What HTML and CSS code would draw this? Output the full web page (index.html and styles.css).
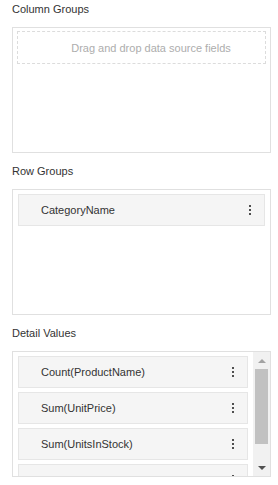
FILE: index.html
```html
<!DOCTYPE html>
<html lang="en">
<head>
    <meta charset="UTF-8">
    <meta name="viewport" content="width=device-width, initial-scale=1.0">
    <title>Pivot Field List</title>
    <link rel="stylesheet" href="styles.css">
</head>
<body>
<div class="field-list">
    <div class="axis-title first">Column Groups</div>
    <div class="axis-box">
        <div class="drop-hint">Drag and drop data source fields</div>
    </div>

    <div class="axis-title">Row Groups</div>
    <div class="axis-box">
        <div class="field-item">
            <span class="field-name">CategoryName</span>
            <svg class="kebab" width="4" height="12" viewBox="0 0 4 12"><rect x="1" y="1" width="2" height="2"/><rect x="1" y="5" width="2" height="2"/><rect x="1" y="9" width="2" height="2"/></svg>
        </div>
    </div>

    <div class="axis-title">Detail Values</div>
    <div class="axis-box scrolled">
        <div class="axis-list">
            <div class="field-item">
                <span class="field-name">Count(ProductName)</span>
                <svg class="kebab" width="4" height="12" viewBox="0 0 4 12"><rect x="1" y="1" width="2" height="2"/><rect x="1" y="5" width="2" height="2"/><rect x="1" y="9" width="2" height="2"/></svg>
            </div>
            <div class="field-item">
                <span class="field-name">Sum(UnitPrice)</span>
                <svg class="kebab" width="4" height="12" viewBox="0 0 4 12"><rect x="1" y="1" width="2" height="2"/><rect x="1" y="5" width="2" height="2"/><rect x="1" y="9" width="2" height="2"/></svg>
            </div>
            <div class="field-item">
                <span class="field-name">Sum(UnitsInStock)</span>
                <svg class="kebab" width="4" height="12" viewBox="0 0 4 12"><rect x="1" y="1" width="2" height="2"/><rect x="1" y="5" width="2" height="2"/><rect x="1" y="9" width="2" height="2"/></svg>
            </div>
            <!-- next item is scrolled out of view, only its top edge shows -->
            <div class="field-item">
                <span class="field-name"></span>
                <svg class="kebab" width="4" height="12" viewBox="0 0 4 12"><rect x="1" y="1" width="2" height="2"/><rect x="1" y="5" width="2" height="2"/><rect x="1" y="9" width="2" height="2"/></svg>
            </div>
        </div>
        <div class="scrollbar">
            <div class="scroll-btn"><span class="arrow-up"></span></div>
            <div class="scroll-track"><div class="scroll-thumb"></div></div>
            <div class="scroll-btn"><span class="arrow-down"></span></div>
        </div>
    </div>
</div>
</body>
</html>
```

FILE: styles.css
```css
:root {
    --text: #333333;
    --hint: #adadad;
    --box-border: #e0e0e0;
    --item-border: #e6e6e6;
    --item-background: #f5f5f5;
    --kebab: #4f4f4f;
    --gutter: #f1f1f1;
    --thumb: #c1c1c1;
}

* {
    box-sizing: border-box;
    margin: 0;
    padding: 0;
}

body {
    font-family: 'Liberation Sans', Arial, sans-serif;
    font-size: 11px;
    color: var(--text);
    background-color: #ffffff;
}

.field-list {
    padding: 0 7px 0 12px;
}

.axis-title {
    line-height: 16px;
    padding: 10px 0;
}

.axis-title.first {
    padding-top: 1px;
}

.axis-box {
    height: 126px;
    border: 1px solid var(--box-border);
    padding: 4px 5px;
    overflow: hidden;
}

.drop-hint {
    margin: -1px -1px 0;
    height: 33px;
    border: 1px dashed #dcdcdc;
    color: var(--hint);
    display: flex;
    align-items: center;
    justify-content: center;
    padding-left: 19px;
}

.field-item {
    height: 32px;
    margin-bottom: 4px;
    border: 1px solid var(--item-border);
    background-color: var(--item-background);
    display: flex;
    align-items: center;
    padding-left: 22px;
}

.field-name {
    flex: 1;
    white-space: nowrap;
}

.kebab {
    fill: var(--kebab);
    margin-right: 12px;
}

/* Detail values list with its scrollbar */
.axis-box.scrolled {
    display: flex;
    padding: 0;
}

.axis-list {
    flex: 1;
    padding: 4px 5px;
    overflow: hidden;
}

.scrollbar {
    width: 17px;
    background-color: var(--gutter);
    display: flex;
    flex-direction: column;
}

.scroll-btn {
    height: 17px;
    display: flex;
    align-items: center;
    justify-content: center;
}

.arrow-up {
    border-left: 4px solid transparent;
    border-right: 4px solid transparent;
    border-bottom: 4px solid #a3a3a3;
}

.arrow-down {
    border-left: 4px solid transparent;
    border-right: 4px solid transparent;
    border-top: 4px solid #505050;
}

.scroll-track {
    flex: 1;
    padding: 0 2px;
}

.scroll-thumb {
    height: 75px;
    background-color: var(--thumb);
}
```
